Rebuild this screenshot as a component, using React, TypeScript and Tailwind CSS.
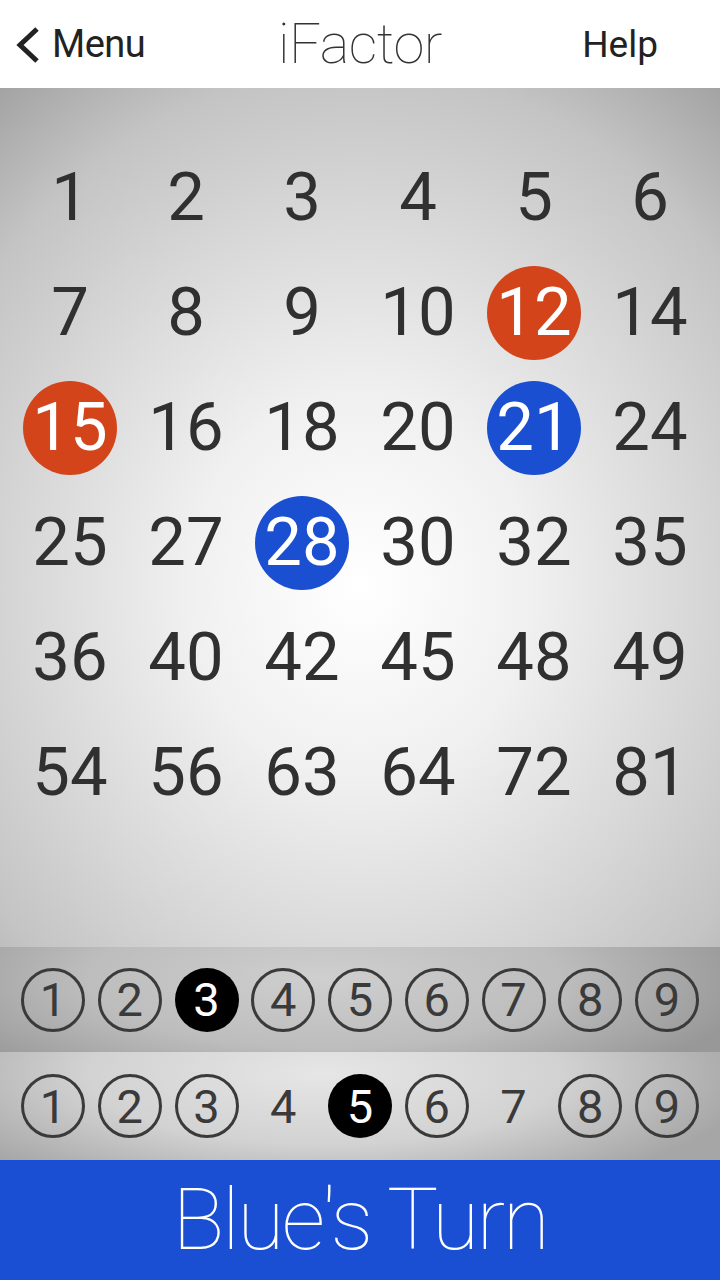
import React from "react";

const board: { n: number; mark?: "red" | "blue" }[] = [
  { n: 1 }, { n: 2 }, { n: 3 }, { n: 4 }, { n: 5 }, { n: 6 },
  { n: 7 }, { n: 8 }, { n: 9 }, { n: 10 }, { n: 12, mark: "red" }, { n: 14 },
  { n: 15, mark: "red" }, { n: 16 }, { n: 18 }, { n: 20 }, { n: 21, mark: "blue" }, { n: 24 },
  { n: 25 }, { n: 27 }, { n: 28, mark: "blue" }, { n: 30 }, { n: 32 }, { n: 35 },
  { n: 36 }, { n: 40 }, { n: 42 }, { n: 45 }, { n: 48 }, { n: 49 },
  { n: 54 }, { n: 56 }, { n: 63 }, { n: 64 }, { n: 72 }, { n: 81 },
];

type Pick = "ring" | "plain" | "on";

const topRow: Pick[] = ["ring", "ring", "on", "ring", "ring", "ring", "ring", "ring", "ring"];
const bottomRow: Pick[] = ["ring", "ring", "ring", "plain", "on", "ring", "plain", "ring", "ring"];

function Selector({ picks }: { picks: Pick[] }) {
  return (
    <div className="flex justify-between px-[21px]">
      {picks.map((p, i) => {
        const base = "w-[64px] h-[64px] rounded-full flex items-center justify-center text-[47px] leading-none";
        if (p === "on") {
          return (
            <div key={i} className={`${base} bg-black text-white`}>
              {i + 1}
            </div>
          );
        }
        if (p === "plain") {
          return (
            <div key={i} className={`${base} text-[#3a3a3a]`}>
              {i + 1}
            </div>
          );
        }
        return (
          <div key={i} className={`${base} border-[3px] border-[#3a3a3a] text-[#3a3a3a]`}>
            {i + 1}
          </div>
        );
      })}
    </div>
  );
}

export default function App() {
  return (
    <div className="w-[720px] h-[1280px] flex flex-col overflow-hidden font-['Roboto',sans-serif]">
      {/* nav bar */}
      <div className="h-[88px] bg-white flex items-center justify-between relative shrink-0">
        <div className="flex items-center pl-[15px] gap-[11px] text-[#222] leading-none">
          <svg width="26" height="38" viewBox="0 0 26 38" className="mt-[1px]">
            <path d="M22 3 L5 19 L22 35" fill="none" stroke="#222" strokeWidth="5" />
          </svg>
          <span className="text-[38px] tracking-[-0.5px]">Menu</span>
        </div>
        <span className="absolute left-0 right-0 text-center font-thin text-[56px] text-[#333] leading-none tracking-[-0.5px] pointer-events-none">
          iFactor
        </span>
        <span className="pr-[62px] text-[37px] text-[#222] leading-none">Help</span>
      </div>

      {/* board */}
      <div className="h-[859px] shrink-0 bg-[radial-gradient(ellipse_80%_75%_at_50%_58%,#ffffff_0%,#f0f0f0_30%,#d6d6d6_60%,#c4c4c4_80%,#a2a2a2_100%)] pt-[52px] px-[12px]">
        <div className="grid grid-cols-6">
          {board.map((c) => (
            <div key={c.n} className="h-[115px] flex items-center justify-center">
              {c.mark ? (
                <div
                  className={`w-[94px] h-[94px] rounded-full flex items-center justify-center text-white text-[67px] leading-none ${
                    c.mark === "red" ? "bg-[#d3441a]" : "bg-[#1a4fd2]"
                  }`}
                >
                  {c.n}
                </div>
              ) : (
                <span className="text-[67px] leading-none text-[#303030]">{c.n}</span>
              )}
            </div>
          ))}
        </div>
      </div>

      {/* number pickers */}
      <div className="h-[105px] shrink-0 flex items-center bg-[radial-gradient(ellipse_60%_120%_at_45%_30%,#cfcfcf_0%,#bdbdbd_55%,#989898_100%)]">
        <div className="w-full">
          <Selector picks={topRow} />
        </div>
      </div>
      <div className="h-[108px] shrink-0 flex items-center bg-[radial-gradient(ellipse_60%_120%_at_45%_20%,#e6e6e6_0%,#d2d2d2_55%,#a6a6a6_100%)]">
        <div className="w-full">
          <Selector picks={bottomRow} />
        </div>
      </div>

      {/* turn banner */}
      <div className="flex-1 bg-[#1a4fd4] flex items-center justify-center">
        <span className="font-thin text-white text-[86px] leading-none tracking-[-2.5px]">Blue's Turn</span>
      </div>
    </div>
  );
}
